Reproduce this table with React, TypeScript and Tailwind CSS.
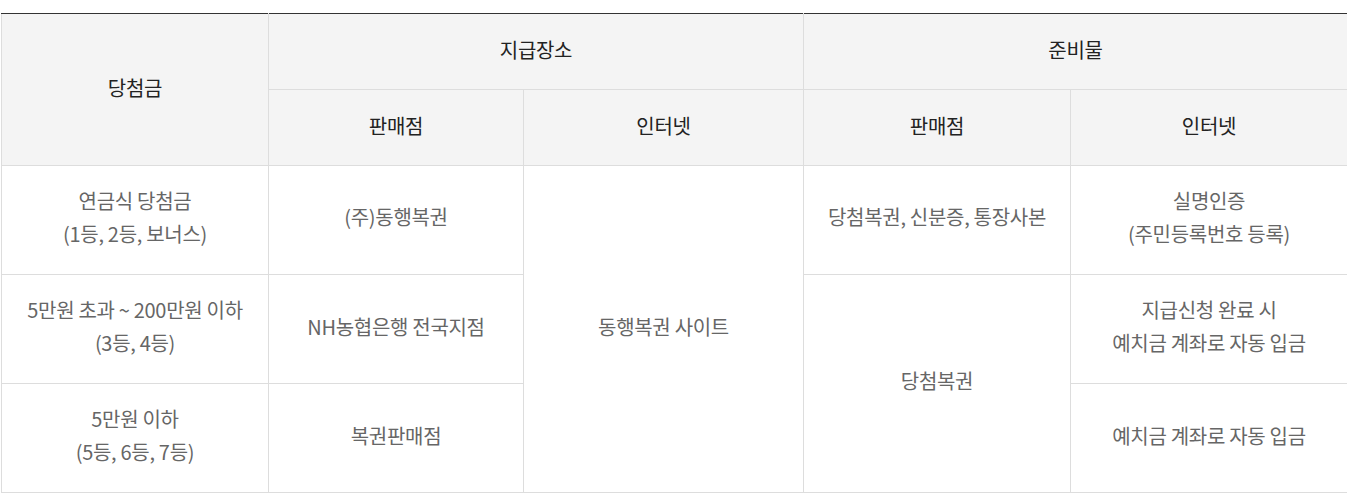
import React from "react";

const th = "border border-[#dddddd] bg-[#f4f4f4] font-normal text-[#222222]";
const td = "border border-[#dddddd] text-[#666666]";

export default function App() {
  return (
    <div
      className="bg-white pt-[13px] pl-px"
      style={{ fontFamily: '"Noto Sans CJK KR", "Noto Sans", sans-serif' }}
    >
      <table className="w-[1346px] table-fixed border-collapse border-t border-t-[#333333] text-center text-[20px] leading-[33px] tracking-[-0.3px]">
        <colgroup>
          <col className="w-[267px]" />
          <col className="w-[255px]" />
          <col className="w-[280px]" />
          <col className="w-[267px]" />
          <col className="w-[277px]" />
        </colgroup>
        <thead>
          <tr className="h-[76px]">
            <th rowSpan={2} className={th + " border-t-[#333333] pb-[4px]"}>
              당첨금
            </th>
            <th colSpan={2} className={th + " border-t-[#333333] pb-[4px]"}>
              지급장소
            </th>
            <th colSpan={2} className={th + " border-t-[#333333] pb-[4px]"}>
              준비물
            </th>
          </tr>
          <tr className="h-[76px]">
            <th className={th + " pb-[4px]"}>판매점</th>
            <th className={th + " pb-[4px]"}>인터넷</th>
            <th className={th + " pb-[4px]"}>판매점</th>
            <th className={th + " pb-[4px]"}>인터넷</th>
          </tr>
        </thead>
        <tbody>
          <tr className="h-[109px]">
            <td className={td + " pb-[6px]"}>
              연금식 당첨금
              <br />
              (1등, 2등, 보너스)
            </td>
            <td className={td + " pb-[8px]"}>(주)동행복권</td>
            <td rowSpan={3} className={td + " pb-[6px]"}>
              동행복권 사이트
            </td>
            <td className={td + " pb-[8px]"}>당첨복권, 신분증, 통장사본</td>
            <td className={td + " pb-[6px]"}>
              실명인증
              <br />
              (주민등록번호 등록)
            </td>
          </tr>
          <tr className="h-[109px]">
            <td className={td + " pb-[6px]"}>
              5만원 초과 ~ 200만원 이하
              <br />
              (3등, 4등)
            </td>
            <td className={td + " pb-[6px]"}>NH농협은행 전국지점</td>
            <td rowSpan={2} className={td + " pb-[6px]"}>
              당첨복권
            </td>
            <td className={td + " pb-[6px]"}>
              지급신청 완료 시
              <br />
              예치금 계좌로 자동 입금
            </td>
          </tr>
          <tr className="h-[109px]">
            <td className={td + " pb-[6px]"}>
              5만원 이하
              <br />
              (5등, 6등, 7등)
            </td>
            <td className={td + " pb-[6px]"}>복권판매점</td>
            <td className={td + " pb-[6px]"}>예치금 계좌로 자동 입금</td>
          </tr>
        </tbody>
      </table>
    </div>
  );
}
